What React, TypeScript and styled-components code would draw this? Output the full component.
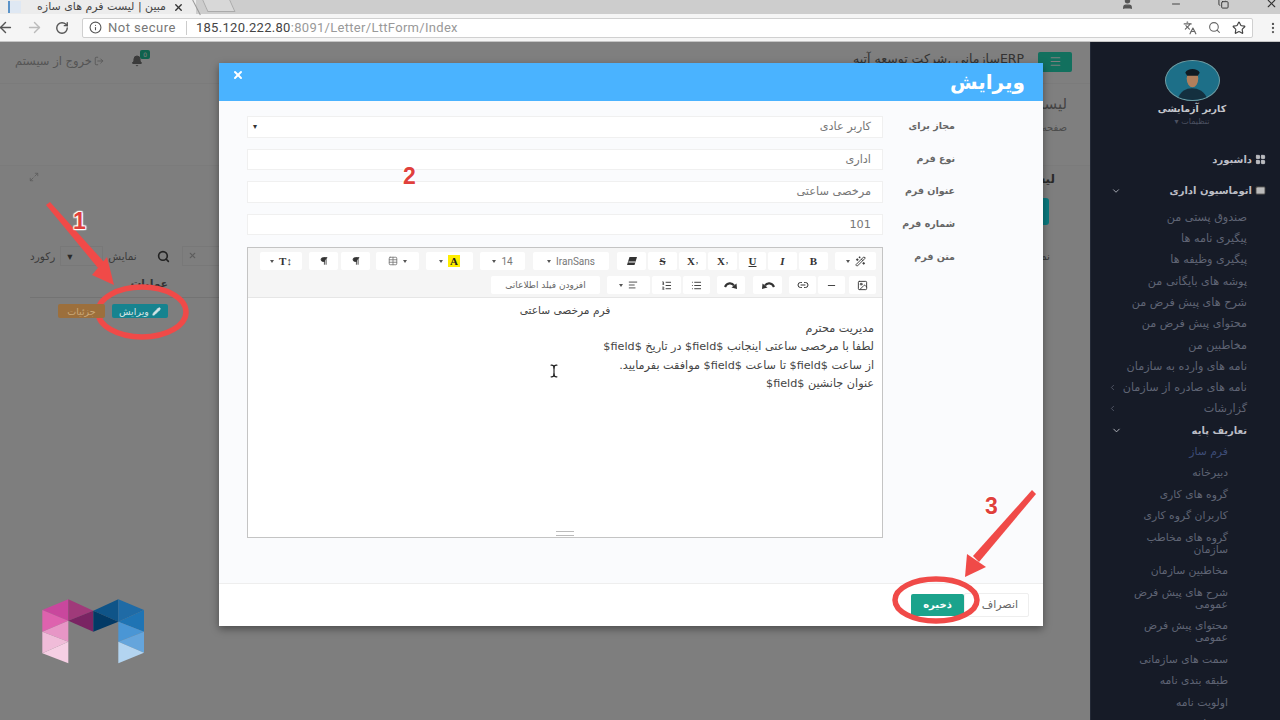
import React from "react"
import styled, { createGlobalStyle } from "styled-components"
import {
	ArrowLeft,
	ArrowRight,
	RotateCw,
	Info,
	Search,
	Star,
	MoreVertical,
	X,
	Minus,
	Bell,
	LogOut,
	Menu,
	User,
	Pencil,
	ChevronDown,
	ChevronLeft,
	Mail,
	LayoutGrid,
	Table,
	Link2,
	Image,
	List,
	ListOrdered,
	AlignLeft,
	Wand2,
	Pilcrow,
	Languages,
	Copy,
	Maximize2,
	TextCursor,
} from "lucide-react"

// ************
// data
// ************

const FA = `"DejaVu Sans", "Noto Sans", sans-serif`

const adminItems = [
	"صندوق پستی من",
	"پیگیری نامه ها",
	"پیگیری وظیفه ها",
	"پوشه های بایگانی من",
	"شرح های پیش فرض من",
	"محتوای پیش فرض من",
	"مخاطبین من",
	"نامه های وارده به سازمان",
]

const baseItems = [
	"دبیرخانه",
	"گروه های کاری",
	"کاربران گروه کاری",
	"گروه های مخاطب سازمان",
	"مخاطبین سازمان",
	"شرح های پیش فرض عمومی",
	"محتوای پیش فرض عمومی",
	"سمت های سازمانی",
	"طبقه بندی نامه",
	"اولویت نامه",
	"نوع نامه",
]

const bodyLines = [
	"مدیریت محترم",
	"لطفا با مرخصی ساعتی اینجانب $field$ در تاریخ $field$",
	"از ساعت $field$ تا ساعت $field$ موافقت بفرمایید.",
	"عنوان جانشین $field$",
]

// ************
// small drawings
// ************

function CurveArrow({ flip }: { flip?: boolean }) {
	return (
		<svg width="14" height="9" viewBox="0 0 14 9" style={flip ? { transform: "scaleX(-1)" } : undefined}>
			<path d="M1 6C3 1.5 8 1.5 10 4.5" fill="none" stroke="#333" strokeWidth="2.2" />
			<polygon points="13,8 7.5,6.5 12.5,2.5" fill="#333" />
		</svg>
	)
}

function EraserMark() {
	return (
		<svg width="12" height="10" viewBox="0 0 12 10">
			<polygon points="1,9 3.5,1 11,1 8.5,9" fill="#333" />
			<line x1="2.5" y1="6" x2="9.5" y2="6" stroke="#fff" strokeWidth="1" />
		</svg>
	)
}

// ************
// component
// ************

export default function App() {
	return (
		<Screen>
			<GlobalStyle />
			<TabStrip>
				<Favicon />
				<TabTitle dir="rtl">مبین | لیست فرم های سازه</TabTitle>
				<X size={11} strokeWidth={3} color="#333" />
				<ActiveTabEdge />
				<NewTab />
				<WindowControls>
					<User size={13} fill="#555" color="#555" />
					<Minus size={12} color="#444" />
					<Copy size={11} color="#333" />
					<X size={13} color="#333" />
				</WindowControls>
			</TabStrip>

			<NavBar>
				<ArrowLeft size={17} color="#555" />
				<ArrowRight size={17} color="#bbb" />
				<RotateCw size={14} color="#555" strokeWidth={2.4} />
				<Omnibox>
					<Info size={13} color="#555" />
					<NotSecure>Not secure</NotSecure>
					<OmniDivider />
					<Url>
						185.120.222.80<span>:8091/Letter/LttForm/Index</span>
					</Url>
					<OmniIcons>
						<Languages size={14} color="#666" />
						<Search size={13} color="#666" />
						<Star size={14} color="#444" />
					</OmniIcons>
				</Omnibox>
				<MoreVertical size={14} color="#555" />
			</NavBar>

			<Page>
				<Main>
					<TopBar>
						<Logout>
							خروج از سیستم
							<LogOut size={10} />
						</Logout>
						<BellWrap>
							<Bell size={12} fill="#777" color="#777" />
							<Badge>0</Badge>
						</BellWrap>
						<Brand dir="rtl">ERPسازمانی ,شرکت توسعه آتیه</Brand>
						<MenuButton>
							<Menu size={13} color="#fff" />
						</MenuButton>
					</TopBar>
					<PageTitle dir="rtl">
						<h1>لیست فرم ها</h1>
						<small>صفحه اصلی</small>
					</PageTitle>
					<Panel>
						<PanelHead>
							<Maximize2 size={10} color="#bbb" />
							<PanelSide>
								<PanelTitle dir="rtl">لیست فرم ها</PanelTitle>
								<NewButton />
							</PanelSide>
						</PanelHead>
						<TableTools>
							<span>رکورد</span>
							<SmallSelect>▾</SmallSelect>
							<span>نمایش</span>
							<SearchMark>
								<Search size={13} color="#444" strokeWidth={3} />
							</SearchMark>
							<SearchBox>
								<X size={9} color="#bbb" strokeWidth={3} />
							</SearchBox>
							<SideNote dir="rtl">نمایش</SideNote>
						</TableTools>
						<TableHead>
							<b>عملیات</b>
						</TableHead>
						<RowActions>
							<RowButton $color="#9c6f3c" $text="#c9a878">جزئیات</RowButton>
							<RowButton $color="#16838f" $text="#d5e4e6">
								ویرایش
								<Pencil size={9} fill="#d5e4e6" />
							</RowButton>
						</RowActions>
					</Panel>
				</Main>

				<Sidebar>
					<Avatar>
						<AvatarFace viewBox="0 0 55 40" preserveAspectRatio="none">
							<path d="M12 40c2-9 9-12 15-12s14 3 16 12z" fill="#14303f" />
							<ellipse cx="27.5" cy="18" rx="6" ry="9" fill="#b07f5c" />
							<path d="M20 12c2-5 13-5 15 0l-2 3H22z" fill="#0f1a22" />
						</AvatarFace>
					</Avatar>
					<UserName>کاربر آزمایشی</UserName>
					<UserSettings>▾ تنظیمات</UserSettings>
					<MenuList dir="rtl">
						<TopItem $top={21}>
							<LayoutGrid size={11} fill="#bbb" />
							داشبورد
						</TopItem>
						<TopItem $top={10} $bottom={5}>
							<Mail size={11} fill="#bbb" color="#333" />
							اتوماسیون اداری
							<MenuChevron>
								<ChevronDown size={10} />
							</MenuChevron>
						</TopItem>
						{adminItems.map((item) => (
							<SubItem key={item}>{item}</SubItem>
						))}
						<SubItem>
							نامه های صادره از سازمان
							<MenuChevron>
								<ChevronLeft size={9} />
							</MenuChevron>
						</SubItem>
						<SubItem>
							گزارشات
							<MenuChevron>
								<ChevronLeft size={9} />
							</MenuChevron>
						</SubItem>
						<TopItem $top={0} $inset>
							تعاریف پایه
							<MenuChevron>
								<ChevronDown size={11} />
							</MenuChevron>
						</TopItem>
						<DeepItem $active>فرم ساز</DeepItem>
						{baseItems.map((item) => (
							<DeepItem key={item}>{item}</DeepItem>
						))}
					</MenuList>
				</Sidebar>
			</Page>

			<Backdrop />

			<Modal>
				<ModalHeader>
					<X size={12} color="#fff" strokeWidth={4} />
					<h2>ویرایش</h2>
				</ModalHeader>
				<ModalBody>
					<Fields>
						<FieldRow>
							<Input>
								<span>▾</span>
								<b>کاربر عادی</b>
							</Input>
							<Label>مجاز برای</Label>
						</FieldRow>
						<FieldRow>
							<Input>
								<i />
								<b>اداری</b>
							</Input>
							<Label>نوع فرم</Label>
						</FieldRow>
						<FieldRow>
							<Input>
								<i />
								<b>مرخصی ساعتی</b>
							</Input>
							<Label>عنوان فرم</Label>
						</FieldRow>
						<FieldRow>
							<Input>
								<i />
								<b>101</b>
							</Input>
							<Label>شماره فرم</Label>
						</FieldRow>
						<FieldRow $tall>
							<Editor>
								<Toolbar>
									<ToolRow>
										<Tool $w={42}><Caret />T↕</Tool>
										<Tool $w={29} $ml={7}><Pilcrow size={10} fill="#333" /></Tool>
										<Tool $w={29} $ml={3}><Pilcrow size={10} fill="#333" /></Tool>
										<Tool $w={43} $ml={6}><Table size={10} color="#777" /><Caret /></Tool>
										<Tool $w={47} $ml={7}><Caret /><Highlight>A</Highlight></Tool>
										<Tool $w={45} $ml={7} $plain><Caret />14</Tool>
										<Tool $w={76} $ml={8} $plain><Caret />IranSans</Tool>
										<Tool $w={29} $ml={8}><EraserMark /></Tool>
										<Tool $w={29} $ml={2}><s>S</s></Tool>
										<Tool $w={27} $ml={2}>X<sub>,</sub></Tool>
										<Tool $w={29} $ml={2}>X<sup>,</sup></Tool>
										<Tool $w={27} $ml={2}><u>U</u></Tool>
										<Tool $w={29} $ml={2}><em>I</em></Tool>
										<Tool $w={29} $ml={2}>B</Tool>
										<Tool $w={41} $ml={7}><Caret /><Wand2 size={11} /></Tool>
									</ToolRow>
									<ToolRow>
										<FieldTool dir="rtl">افزودن فیلد اطلاعاتی</FieldTool>
										<Tool $w={43} $ml={7}><Caret /><AlignLeft size={10} /></Tool>
										<Tool $w={29} $ml={2}><ListOrdered size={11} /></Tool>
										<Tool $w={27} $ml={2}><List size={11} /></Tool>
										<Tool $w={28} $ml={7}><CurveArrow /></Tool>
										<Tool $w={29} $ml={8}><CurveArrow flip /></Tool>
										<Tool $w={27} $ml={7}><Link2 size={12} /></Tool>
										<Tool $w={27} $ml={2}><Minus size={11} /></Tool>
										<Tool $w={27} $ml={4}><Image size={11} /></Tool>
									</ToolRow>
								</Toolbar>
								<EditorText dir="rtl">
									<EditorTitle>فرم مرخصی ساعتی</EditorTitle>
									{bodyLines.map((line) => (
										<p key={line}>{line}</p>
									))}
								</EditorText>
								<Grip />
							</Editor>
							<Label>متن فرم</Label>
						</FieldRow>
					</Fields>
				</ModalBody>
				<ModalFooter>
					<CancelButton dir="rtl">انصراف</CancelButton>
					<SaveButton dir="rtl">ذخیره</SaveButton>
				</ModalFooter>
			</Modal>

			<Cursor>
				<TextCursor size={14} color="#222" />
			</Cursor>

			<Logo viewBox="0 0 660 420">
				<polygon points="127,90 205,58 205,122" fill="#c9479d" />
				<polygon points="127,90 205,122 127,155" fill="#de62ae" />
				<polygon points="205,122 127,155 205,185" fill="#e796c6" />
				<polygon points="127,155 205,185 127,220" fill="#f0bcd9" />
				<polygon points="205,185 127,220 205,250" fill="#f6cfe4" />
				<polygon points="205,58 280,92 205,122" fill="#a03a7a" />
				<polygon points="205,122 280,92 280,155" fill="#7a2463" />
				<polygon points="280,92 355,58 355,125" fill="#0f5488" />
				<polygon points="280,92 355,125 280,155" fill="#033a66" />
				<polygon points="355,58 432,90 355,125" fill="#1f6ba6" />
				<polygon points="432,90 355,125 432,155" fill="#1f74b4" />
				<polygon points="355,125 432,155 355,185" fill="#4a96d5" />
				<polygon points="432,155 355,185 432,218" fill="#65a5dc" />
				<polygon points="355,185 432,218 355,250" fill="#b3d4f0" />
			</Logo>

			<Marks viewBox="0 0 1280 720">
				<g fill="none" stroke="#f04a48" strokeWidth="5.5">
					<ellipse cx="142" cy="312" rx="44" ry="25" />
					<ellipse cx="936" cy="600" rx="41" ry="21" />
				</g>
				<polygon points="46,205 50,202 104,262 98,268" fill="#f04a48" />
				<polygon points="1032,490 1036,494 979,562 973,556" fill="#f04a48" />
				<polygon points="114,285 92,275 107,257" fill="#f04a48" />
				<polygon points="965,577 967,554 986,567" fill="#f04a48" />
			</Marks>
			<Mark $x={73} $y={208}>1</Mark>
			<Mark $x={403} $y={163}>2</Mark>
			<Mark $x={985} $y={493}>3</Mark>
		</Screen>
	)
}

// ************
// styles
// ************

const GlobalStyle = createGlobalStyle`
	html, body {
		margin: 0;
		padding: 0;
		width: 1280px;
		height: 720px;
		overflow: hidden;
		background: #fff;
	}
	* {
		box-sizing: border-box;
	}
`
const Screen = styled.div`
	position: relative;
	display: flex;
	flex-direction: column;

	width: 1280px;
	height: 720px;
	overflow: hidden;

	font-family: ${FA};
`
const TabStrip = styled.div`
	position: relative;
	display: flex;
	align-items: center;
	gap: 7px;

	height: 14px;
	padding-left: 8px;

	background: linear-gradient(90deg, #ececec 0, #ececec 196px, #cdcdcd 196px);
`
const Favicon = styled.span`
	width: 13px;
	height: 12px;
	margin-right: 3px;
	background: #dfe8f3;
	border-left: 2px solid #5b93c9;
`
const TabTitle = styled.span`
	width: 135px;
	overflow: hidden;
	white-space: nowrap;

	color: #444;
	font-size: 11px;
	line-height: 14px;
`
const ActiveTabEdge = styled.span`
	position: absolute;
	left: 196px;
	top: -1px;
	width: 1px;
	height: 17px;
	background: #999;
	transform: rotate(-27deg);
`
const NewTab = styled.span`
	position: absolute;
	left: 204px;
	top: -4px;
	width: 28px;
	height: 16px;
	border: 1px solid #aaa;
	background: #d8d8d8;
	transform: skewX(24deg);
`
const WindowControls = styled.div`
	position: absolute;
	left: 1121px;
	top: -3px;
	display: flex;
	align-items: center;
	gap: 36px;
`
const NavBar = styled.div`
	display: flex;
	align-items: center;
	gap: 12px;

	height: 28px;
	margin-left: -3px;

	background: #f5f5f5;
	border-bottom: 1px solid #c5c5c5;
`
const Omnibox = styled.div`
	display: flex;
	align-items: center;

	width: 1172px;
	height: 20px;
	margin: 0 1px;
	padding: 0 6px;

	background: #fff;
	border: 1px solid #d0d0d0;
	border-radius: 2px;

	font-family: Roboto, sans-serif;
	font-size: 13px;
`
const NotSecure = styled.span`
	margin-left: 6px;
	color: #777;
	letter-spacing: 0.5px;
`
const OmniDivider = styled.span`
	width: 1px;
	height: 14px;
	margin: 0 9px 0 10px;
	background: #ccc;
`
const Url = styled.span`
	color: #444;
	letter-spacing: 0.3px;

	span {
		color: #999;
	}
`
const OmniIcons = styled.div`
	display: flex;
	align-items: center;
	gap: 11px;
	margin-left: auto;
`
const Page = styled.div`
	display: flex;
	flex: 1;
	min-height: 0;
`
const Main = styled.main`
	display: flex;
	flex-direction: column;
	flex: 1;
	min-width: 0;
	background: #fff;
`
const TopBar = styled.header`
	display: flex;
	align-items: center;

	height: 42px;
	padding: 0 18px 0 15px;
	border-bottom: 1px solid #f6f6f6;
`
const Logout = styled.span`
	display: flex;
	align-items: center;
	gap: 2px;
	margin-bottom: 4px;

	color: #aaa;
	font-size: 11.5px;
`
const BellWrap = styled.span`
	position: relative;
	display: flex;
	margin: 0 0 4px 27px;
`
const Badge = styled.span`
	position: absolute;
	top: -5px;
	right: -7px;

	padding: 0 3px;
	border-radius: 2px;

	background: #1fc59a;
	color: #fff;
	font-size: 6px;
	line-height: 9px;
`
const Brand = styled.span`
	margin: 0 14px 8px auto;
	color: #666;
	font-size: 12.5px;
	white-space: nowrap;
`
const MenuButton = styled.span`
	display: flex;
	align-items: center;
	justify-content: center;

	width: 34px;
	height: 20px;
	margin-bottom: 2px;
	border-radius: 2px;

	background: #24e0bc;
`
const PageTitle = styled.div`
	height: 81px;
	padding: 10px 23px 0 0;
	white-space: nowrap;

	h1 {
		margin: 0 0 2px;
		color: #888;
		font-size: 15px;
		font-weight: 400;
		line-height: 20px;
	}
	small {
		color: #999;
		font-size: 10px;
	}
`
const Panel = styled.section`
	flex: 1;
	background: #fdfdfd;
	border-top: 1px solid #f6f6f6;
	color: #777;
	font-size: 10.5px;
`
const PanelHead = styled.div`
	display: flex;
	justify-content: space-between;
	align-items: flex-start;

	height: 69px;
	padding: 6px 35px 0 29px;
`
const PanelSide = styled.div`
	display: flex;
	flex-direction: column;
	align-items: flex-end;
`
const PanelTitle = styled.span`
	color: #555;
	font-size: 12px;
	font-weight: 700;
	line-height: 14px;
	white-space: nowrap;
`
const NewButton = styled.span`
	width: 60px;
	height: 27px;
	margin: 12px 6px 0 0;
	border-radius: 3px;
	background: #14f4ff;
`
const TableTools = styled.div`
	display: flex;
	align-items: center;
	gap: 5px;

	height: 42px;
	padding: 0 40px 0 30px;
`
const SmallSelect = styled.span`
	width: 43px;
	height: 20px;
	padding-left: 6px;
	border: 1px solid #f0f0f0;
	color: #555;
	line-height: 18px;
`
const SearchMark = styled.span`
	display: flex;
	margin-left: 15px;
`
const SearchBox = styled.span`
	width: 60px;
	height: 20px;
	margin-left: 7px;
	padding: 3px 0 0 5px;
	border: 1px solid #f0f0f0;
`
const SideNote = styled.span`
	margin-left: auto;
	white-space: nowrap;
`
const TableHead = styled.div`
	display: flex;
	justify-content: flex-end;

	width: 190px;
	height: 21px;
	margin-left: 30px;
	padding-right: 52px;
	border-bottom: 1px solid #e6e6e6;

	color: #666;
	line-height: 13px;
`
const RowActions = styled.div`
	position: relative;
	z-index: 1;
	display: flex;
	gap: 7px;
	padding: 6px 0 0 58px;
`
const RowButton = styled.span<{ $color: string; $text: string }>`
	display: flex;
	align-items: center;
	justify-content: center;
	gap: 3px;

	height: 14px;
	padding: 0 7px;
	min-width: 47px;
	border-radius: 2px;

	background: ${({ $color }) => $color};
	color: ${({ $text }) => $text};
	font-size: 9.5px;
`
const Sidebar = styled.aside`
	position: relative;
	z-index: 1;
	display: flex;
	flex-direction: column;
	align-items: center;

	width: 190px;
	padding: 18px 0 0 13px;
	overflow: hidden;

	background: #161b27;
	border-left: 1px solid #232936;
`
const Avatar = styled.div`
	width: 55px;
	height: 41px;
	flex: none;
	border: 1px solid #6f9da3;
	border-radius: 50%;
	overflow: hidden;

	background: #1d6f88;
`
const AvatarFace = styled.svg`
	display: block;
	width: 100%;
	height: 100%;
`
const UserName = styled.div`
	margin-top: 1px;
	color: #c4c6cc;
	font-size: 9.5px;
	font-weight: 700;
	line-height: 14px;
	white-space: nowrap;
`
const UserSettings = styled.div`
	color: #4b5060;
	font-size: 8px;
	line-height: 12px;
	white-space: nowrap;
`
const MenuList = styled.nav`
	align-self: stretch;
	margin-left: -13px;
`
const MenuChevron = styled.span`
	display: flex;
	margin-right: auto;
`
const TopItem = styled.div<{ $top: number; $bottom?: number; $inset?: boolean }>`
	display: flex;
	align-items: center;
	gap: 3px;

	height: 21.3px;
	margin: ${({ $top }) => $top}px 0 ${({ $bottom }) => $bottom || 0}px;
	padding: 0 ${({ $inset }) => ($inset ? "33px" : "14px")} 0 20px;

	color: #bcbec6;
	font-size: 10px;
	font-weight: 700;
	white-space: nowrap;
`
const SubItem = styled.div`
	display: flex;
	align-items: center;

	height: 21.3px;
	padding: 0 33px 0 17px;

	color: #5f6474;
	font-size: 11.2px;
	white-space: nowrap;
`
const DeepItem = styled.div<{ $active?: boolean }>`
	display: flex;
	align-items: center;

	min-height: 21.3px;
	padding: 4.75px 52px 4.75px 38px;

	color: ${({ $active }) => ($active ? "#3e4d78" : "#5f6474")};
	font-size: 10.8px;
	line-height: 12px;
`
const Backdrop = styled.div`
	position: absolute;
	left: 0;
	right: 0;
	top: 42px;
	bottom: 0;
	background: rgba(0, 0, 0, 0.5);
`
const Modal = styled.div`
	position: absolute;
	left: 219px;
	top: 63px;
	display: flex;
	flex-direction: column;

	width: 824px;
	height: 563px;

	background: #fff;
	box-shadow: 0 3px 8px rgba(0, 0, 0, 0.4);
`
const ModalHeader = styled.div`
	display: flex;
	justify-content: space-between;
	align-items: center;

	height: 38px;
	padding: 0 18px 0 13px;

	background: #4ab3ff;

	svg {
		margin-top: -15px;
	}

	h2 {
		margin: 0;
		color: #fff;
		font-size: 20px;
		font-weight: 700;
		line-height: 38px;
	}
`
const ModalBody = styled.div`
	flex: 1;
	padding: 15px 88px 0 28px;
	background: #fafbfd;
`
const Fields = styled.div`
	display: flex;
	flex-direction: column;
	gap: 11px;
`
const FieldRow = styled.div<{ $tall?: boolean }>`
	display: flex;
	align-items: flex-start;
	justify-content: space-between;

	height: ${({ $tall }) => ($tall ? "291px" : "21.5px")};
	margin-top: ${({ $tall }) => ($tall ? "1px" : "0")};
`
const Label = styled.span`
	width: 46px;
	color: #666;
	font-size: 9.5px;
	font-weight: 700;
	line-height: 19px;
	text-align: right;
	white-space: nowrap;
	direction: rtl;
`
const Input = styled.div`
	display: flex;
	justify-content: space-between;
	align-items: center;

	width: 636px;
	height: 21.5px;
	padding: 0 11px 0 5px;

	background: #fff;
	border: 1px solid #f0f0f0;

	color: #777;
	font-size: 11.3px;

	span {
		font-size: 8px;
		color: #333;
	}
	b {
		font-weight: 400;
	}
`
const Editor = styled.div`
	position: relative;
	display: flex;
	flex-direction: column;

	width: 636px;
	height: 291px;

	background: #fff;
	border: 1px solid #c4c4c4;
`
const Toolbar = styled.div`
	display: flex;
	flex-direction: column;
	gap: 6px;

	height: 50px;
	flex: none;
	padding-top: 4px;

	background: #f5f5f5;
	border-bottom: 1px solid #e6e6e6;
`
const ToolRow = styled.div`
	display: flex;
	justify-content: flex-end;
	padding-right: 6px;
`
const Tool = styled.span<{ $w: number; $ml?: number; $plain?: boolean }>`
	display: flex;
	align-items: center;
	justify-content: center;
	gap: 5px;

	width: ${({ $w }) => $w}px;
	height: 18px;
	margin-left: ${({ $ml }) => $ml || 0}px;

	background: #fff;
	border-radius: 2px;

	color: ${({ $plain }) => ($plain ? "#777" : "#333")};
	font-family: ${({ $plain }) => ($plain ? "Roboto, sans-serif" : `"Liberation Serif", serif`)};
	font-size: ${({ $plain }) => ($plain ? "10px" : "11px")};
	font-weight: ${({ $plain }) => ($plain ? 400 : 700)};

	sub, sup {
		font-size: 8px;
		line-height: 0;
		margin-left: -4px;
	}
`
const FieldTool = styled.span`
	width: 109px;
	height: 18px;

	background: #fff;
	border-radius: 2px;

	color: #666;
	font-size: 9px;
	line-height: 18px;
	text-align: center;
	white-space: nowrap;
`
const Caret = styled.span`
	width: 0;
	height: 0;
	border-left: 2px solid transparent;
	border-right: 2px solid transparent;
	border-top: 3px solid #555;
`
const Highlight = styled.span`
	padding: 0 2px;
	background: #ffee00;
	color: #222;
`
const EditorText = styled.div`
	flex: 1;
	padding: 3px 8px 0;

	color: #444;
	font-size: 11.2px;
	line-height: 18.6px;

	p {
		margin: 0;
	}
`
const EditorTitle = styled.div`
	font-size: 10.6px;
	text-align: center;
`
const Grip = styled.span`
	height: 5px;
	width: 18px;
	margin: 0 auto 1px;
	border-top: 1px solid #bbb;
	border-bottom: 1px solid #bbb;
`
const ModalFooter = styled.div`
	display: flex;
	flex-direction: row-reverse;
	align-items: center;

	height: 43px;
	padding-right: 14px;

	background: #fff;
	border-top: 1px solid #eee;
`
const CancelButton = styled.span`
	width: 65px;
	height: 24px;
	padding: 0 10px 0 0;

	background: #fff;
	border: 1px solid #eee;
	border-radius: 2px;

	color: #666;
	font-size: 11px;
	line-height: 22px;
`
const SaveButton = styled.span`
	width: 53px;
	height: 22px;

	background: #1ba38c;
	border-radius: 2px;

	color: #fff;
	font-size: 10px;
	font-weight: 700;
	line-height: 21px;
	text-align: center;
`
const Cursor = styled.span`
	position: absolute;
	left: 547px;
	top: 364px;
	display: flex;
`
const Logo = styled.svg`
	position: absolute;
	left: 0;
	top: 580px;
	width: 220px;
	height: 140px;
`
const Marks = styled.svg`
	position: absolute;
	left: 0;
	top: 0;
	width: 1280px;
	height: 720px;
	pointer-events: none;
`
const Mark = styled.span<{ $x: number; $y: number }>`
	position: absolute;
	left: ${({ $x }) => $x}px;
	top: ${({ $y }) => $y}px;

	color: #e0403c;
	font-family: "Liberation Sans", sans-serif;
	font-size: 23px;
	font-weight: 700;
	line-height: 26px;
	text-shadow: 0 0 2px #fff, 0 0 2px #fff, 1px 1px 1px #fff, -1px -1px 1px #fff, 1px -1px 1px #fff, -1px 1px 1px #fff;
`
